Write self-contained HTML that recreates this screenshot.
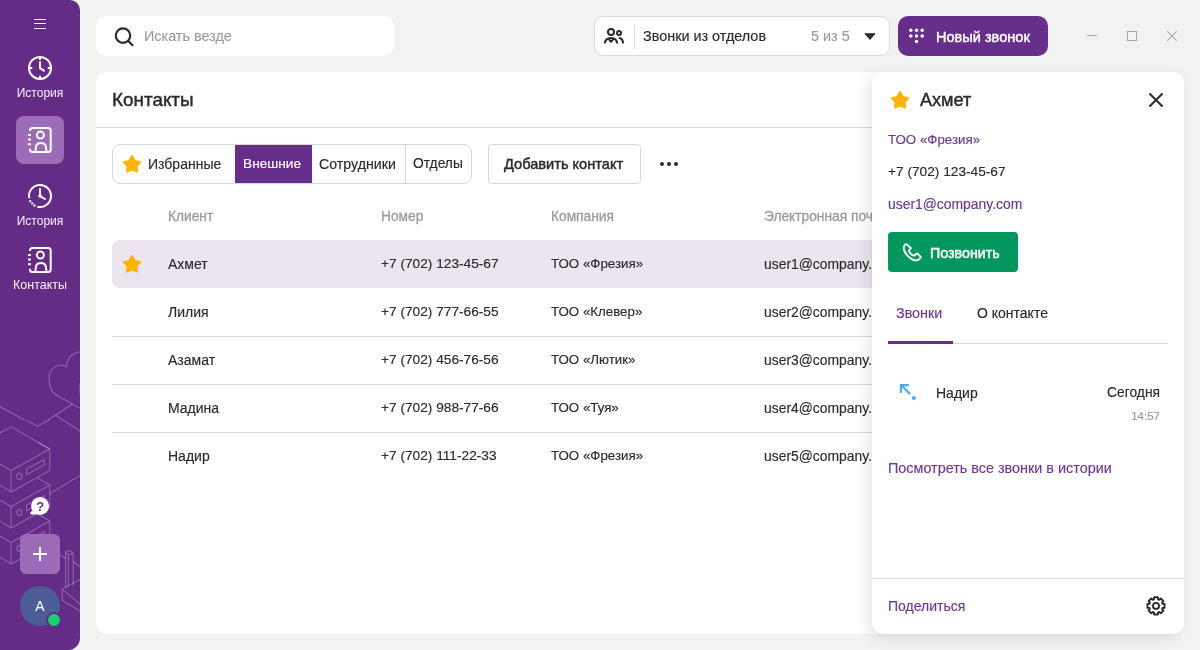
<!DOCTYPE html>
<html><head><meta charset="utf-8">
<style>
*{box-sizing:border-box;margin:0;padding:0}
html,body{width:1200px;height:650px;overflow:hidden;background:#f1f2f2;font-family:"Liberation Sans",sans-serif;color:#2b2b2b}
.abs{position:absolute}
.t{position:absolute;white-space:nowrap;font-size:14px;line-height:20px;height:20px;-webkit-text-stroke:0.15px currentColor}
#side{position:absolute;left:0;top:0;width:80px;height:650px;background:#652c87;border-radius:0 10px 12px 0;overflow:hidden}
.slabel{position:absolute;left:0;width:80px;text-align:center;color:#f6f2f9;font-size:12px;line-height:20px}
.purple{color:#6d3697}
.grey{color:#9b9b9b}
.b{font-weight:bold}
.m{-webkit-text-stroke:0.45px currentColor}
.grey.m{-webkit-text-stroke:0.3px currentColor}
#wrap{position:absolute;left:0;top:0;width:1200px;height:650px;will-change:transform}
</style></head><body><div id="wrap">
<div id="side">
  <!-- background pattern -->
  <svg class="abs" style="left:0;top:0" width="80" height="650" viewBox="0 0 80 650" fill="none" stroke="#ffffff" stroke-opacity="0.26" stroke-width="1.1">
    <path d="M80 351.7C72 353 67 358 66.5 367C64 365 62 365 60.3 365.2C52 366 48 374 49.2 379.4C49 388 53 394 59 396.6L80 408.3"/>
    <path d="M0 406.5L24.6 420M72.6 404L48 420M55.4 415L62.8 420"/>
    <path d="M25.8 420L37.5 426.2L49.2 420M62.8 420L80 431"/>
    <path d="M80 383v11"/>
    <path d="M0 432.9L11.1 426.8L49.8 448.9"/>
    <g id="box">
      <path d="M37.5 441.9L49.8 448.9L11.1 470.5L0 464.3M11.1 470.5V492L49.8 470.5V448.9M0 485.2L11.1 492"/>
      <path d="M26.5 469.2L44.3 459.4V464.9L26.5 474.8Z"/>
      <ellipse cx="19.4" cy="476.4" rx="2.6" ry="3"/>
    </g>
    <use href="#box" y="36"/>
    <use href="#box" y="72"/>
    <path d="M49.8 493.8L80 475.4"/>
    <path d="M65.6 552.3V587.4M68.3 555V586.8M73.2 553V585.5M65.6 552.3L68.9 550.5L73.2 553L68.3 555Z"/>
    <path d="M73.2 561.5L80 566.5M59.7 554.8L65.6 558.5M62.2 589.2L80 579.4M62.2 589.2L80 604M62.2 589.2V600.3L80 611"/>
  </svg>
  <!-- hamburger -->
  <div class="abs" style="left:34px;top:18.5px;width:12px;height:1.2px;background:#fff"></div>
  <div class="abs" style="left:34px;top:23px;width:12px;height:1.2px;background:#fff"></div>
  <div class="abs" style="left:34px;top:27.5px;width:12px;height:1.2px;background:#fff"></div>
  <!-- history 1 -->
  <svg class="abs" style="left:26px;top:54px" width="28" height="28" viewBox="0 0 28 28" fill="none" stroke="#fff" stroke-width="2" stroke-linecap="butt">
    <circle cx="14" cy="13.9" r="11"/>
    <path d="M14 3.5v2.6M14 21.7v2.6M3.6 13.9h2.6M21.8 13.9h2.6"/>
    <path d="M14 8V14.2L17.9 16.7" stroke-linecap="round" stroke-linejoin="round"/>
  </svg>
  <div class="slabel" style="top:82.6px">История</div>
  <!-- active contacts -->
  <div class="abs" style="left:16px;top:116px;width:48px;height:48px;background:#9c6cb8;border-radius:8px"></div>
  <svg class="abs" style="left:26px;top:124px" width="28" height="32" viewBox="0 0 28 32" fill="none" stroke="#fff" stroke-width="2">
    <path d="M4 7V6.5A2.5 2.5 0 0 1 6.5 4H22.2A2.5 2.5 0 0 1 24.7 6.5V25.4A2.5 2.5 0 0 1 22.2 27.9H6.5A2.5 2.5 0 0 1 4 25.4V24.8"/>
    <circle cx="14.4" cy="11.1" r="3.5"/>
    <path d="M9.2 27.9L10 22.5C10.5 20.2 12.5 19.1 14.9 19.1C17.3 19.1 19.3 20.2 19.8 22.5L20.6 27.9"/>
    <path d="M2 11h3M2 15.6h3M2 20.3h3"/>
  </svg>
  <!-- history 2 -->
  <svg class="abs" style="left:26px;top:182px" width="28" height="28" viewBox="0 0 28 28" fill="none" stroke="#fff" stroke-width="2">
    <path d="M11.34 24.67A11 11 0 1 0 3.21 16.16"/>
    <path d="M14 7V14L18.9 17" stroke-linecap="round" stroke-linejoin="round"/>
    <circle cx="14" cy="14" r="1.8" fill="#fff" stroke="none"/>
    <path d="M4.2 19.2h0.01M6.3 21.4h0.01M8.5 23.5h0.01" stroke-width="2" stroke-linecap="square"/>
  </svg>
  <div class="slabel" style="top:210.6px">История</div>
  <!-- contacts -->
  <svg class="abs" style="left:26px;top:244px" width="28" height="32" viewBox="0 0 28 32" fill="none" stroke="#fff" stroke-width="2">
    <path d="M4 7V6.5A2.5 2.5 0 0 1 6.5 4H22.2A2.5 2.5 0 0 1 24.7 6.5V25.4A2.5 2.5 0 0 1 22.2 27.9H6.5A2.5 2.5 0 0 1 4 25.4V24.8"/>
    <circle cx="14.4" cy="11.1" r="3.5"/>
    <path d="M9.2 27.9L10 22.5C10.5 20.2 12.5 19.1 14.9 19.1C17.3 19.1 19.3 20.2 19.8 22.5L20.6 27.9"/>
    <path d="M2 11h3M2 15.6h3M2 20.3h3"/>
  </svg>
  <div class="slabel" style="top:274.5px;font-size:12.5px">Контакты</div>
  <!-- help -->
  <svg class="abs" style="left:28px;top:494px" width="24" height="24" viewBox="0 0 24 24">
    <circle cx="12.1" cy="11.9" r="9" fill="#fff"/>
    <path d="M4.3 16.4L2.3 18.4Q1.8 20.6 4.6 20.6L9 20.4Z" fill="#fff"/>
    <text x="12.2" y="16.6" font-family="Liberation Sans" font-weight="bold" font-size="13" text-anchor="middle" fill="#652c87">?</text>
  </svg>
  <!-- plus -->
  <div class="abs" style="left:20px;top:534px;width:40px;height:40px;background:#9c6cb8;border-radius:6px"></div>
  <div class="abs" style="left:33px;top:553px;width:14px;height:2px;background:#fff"></div>
  <div class="abs" style="left:39px;top:547px;width:2px;height:14px;background:#fff"></div>
  <!-- avatar -->
  <div class="abs" style="left:20px;top:586px;width:40px;height:40px;background:#4a5d97;border-radius:50%;color:#fff;font-size:14px;text-align:center;line-height:40px">A</div>
  <div class="abs" style="left:46px;top:612px;width:16px;height:16px;background:#12d36b;border:2px solid #652c87;border-radius:50%"></div>
</div>

<!-- search -->
<div class="abs" style="left:96px;top:16px;width:298px;height:40px;background:#fff;border-radius:10px">
  <svg class="abs" style="left:17px;top:9px" width="22" height="22" viewBox="0 0 22 22" fill="none" stroke="#2b2b2b" stroke-width="2.2" stroke-linecap="round">
    <circle cx="10" cy="10.6" r="7.2"/><path d="M15.3 15.9L19.5 20.2"/>
  </svg>
  <div class="t grey" style="left:48px;top:9.8px;font-size:14.4px">Искать везде</div>
</div>

<!-- dropdown -->
<div class="abs" style="left:594px;top:16px;width:296px;height:40px;background:#fff;border:1px solid #dadada;border-radius:10px">
  <svg class="abs" style="left:9px;top:8px" width="22" height="22" viewBox="0 0 22 22" fill="none" stroke="#2b2b2b" stroke-width="2">
    <circle cx="7" cy="6.9" r="3"/><circle cx="15" cy="8" r="2"/>
    <path d="M1 18.5C1 15 3.5 13 7 13C10.5 13 13 15 13 18.5"/>
    <path d="M4.2 13.3L7 16.8L9.8 13.3" stroke-linejoin="round"/>
    <path d="M14.75 13C17.5 13 19 15 19 18.5"/>
  </svg>
  <div class="abs" style="left:39px;top:8px;width:1px;height:24px;background:#dcdcdc"></div>
  <div class="t" style="left:48px;top:9px;font-size:14.4px">Звонки из отделов</div>
  <div class="t grey" style="left:216px;top:9px;font-size:14.4px">5 из 5</div>
  <svg class="abs" style="left:269px;top:15.5px" width="12" height="8" viewBox="0 0 12 8"><path d="M1 0.8h10L6 6.4z" fill="#2b2b2b" stroke="#2b2b2b" stroke-linejoin="round"/></svg>
</div>

<!-- new call -->
<div class="abs" style="left:898px;top:16px;width:150px;height:40px;background:#662d8b;border-radius:10px">
  <svg class="abs" style="left:10px;top:12px" width="18" height="18" viewBox="0 0 18 18" fill="#fff">
    <circle cx="2.8" cy="2.2" r="1.75"/><circle cx="8.5" cy="2.2" r="1.75"/><circle cx="14.2" cy="2.2" r="1.75"/>
    <circle cx="2.8" cy="7.9" r="1.75"/><circle cx="8.5" cy="7.9" r="1.75"/><circle cx="14.2" cy="7.9" r="1.75"/>
    <circle cx="8.5" cy="13.6" r="1.75"/>
  </svg>
  <div class="t m" style="left:38px;top:11px;font-size:14.55px;color:#fff">Новый звонок</div>
</div>

<!-- window controls -->
<div class="abs" style="left:1087px;top:35px;width:10px;height:1px;background:#a8a8a8"></div>
<div class="abs" style="left:1127px;top:31px;width:10px;height:10px;border:1px solid #a8a8a8"></div>
<svg class="abs" style="left:1166px;top:30px" width="12" height="12" viewBox="0 0 12 12" stroke="#a8a8a8" stroke-width="1.1"><path d="M1.2 1.2l9.6 9.6M10.8 1.2l-9.6 9.6"/></svg>

<!-- main -->
<div class="abs" style="left:96px;top:72px;width:1088px;height:562px;background:#fff;border-radius:10px;overflow:hidden">
  <div class="t m" style="left:16px;top:18px;font-size:18.9px">Контакты</div>
  <div class="abs" style="left:0;top:55px;width:1088px;height:1px;background:#dcdcdc"></div>
  <!-- segmented -->
  <div class="abs" style="left:16px;top:72px;width:360px;height:40px;border:1px solid #d6d6d6;border-radius:8px;overflow:hidden">
    <div class="abs" style="left:122px;top:-1px;width:77px;height:40px;background:#662d8b"></div>
    <div class="abs" style="left:292px;top:0;width:1px;height:38px;background:#d6d6d6"></div>
  </div>
  <svg class="abs" style="left:24px;top:80px" width="24" height="24" viewBox="0 0 24 24"><path d="M12.00 4.05L14.88 8.79L20.27 10.06L16.66 14.26L17.11 19.79L12.00 17.65L6.89 19.79L7.34 14.26L3.73 10.06L9.12 8.79Z" fill="#ffb400" stroke="#ffb400" stroke-width="1.8" stroke-linejoin="round"/></svg>
  <div class="t" style="left:52px;top:82px">Избранные</div>
  <div class="t" style="left:147px;top:82px;color:#fff;font-size:13.7px">Внешние</div>
  <div class="t" style="left:223px;top:82px;font-size:14.2px">Сотрудники</div>
  <div class="t" style="left:317px;top:82px;font-size:13.8px">Отделы</div>
  <!-- add contact -->
  <div class="abs" style="left:392px;top:72px;width:153px;height:40px;border:1px solid #d6d6d6;border-radius:4px"></div>
  <div class="t m" style="left:408px;top:82px;font-size:14.6px">Добавить контакт</div>
  <!-- more dots -->
  <div class="abs" style="left:564px;top:90px;width:4px;height:4px;border-radius:50%;background:#2b2b2b"></div>
  <div class="abs" style="left:571px;top:90px;width:4px;height:4px;border-radius:50%;background:#2b2b2b"></div>
  <div class="abs" style="left:578px;top:90px;width:4px;height:4px;border-radius:50%;background:#2b2b2b"></div>
  <!-- table header -->
  <div class="t m grey" style="left:72px;top:134.5px;font-size:13.75px">Клиент</div>
  <div class="t m grey" style="left:285px;top:134.5px;font-size:13.75px">Номер</div>
  <div class="t m grey" style="left:455px;top:134.5px;font-size:13.75px">Компания</div>
  <div class="t m grey" style="left:668px;top:134.5px;font-size:13.75px">Электронная почта</div>
  <!-- highlight row -->
  <div class="abs" style="left:16px;top:168px;width:1080px;height:48px;background:#ece5f0;border-radius:8px"></div>
  <svg class="abs" style="left:24px;top:180px" width="24" height="24" viewBox="0 0 24 24"><path d="M12.00 4.05L14.88 8.79L20.27 10.06L16.66 14.26L17.11 19.79L12.00 17.65L6.89 19.79L7.34 14.26L3.73 10.06L9.12 8.79Z" fill="#ffb400" stroke="#ffb400" stroke-width="1.8" stroke-linejoin="round"/></svg>
  <div class="abs" style="left:16px;top:264px;width:1080px;height:1px;background:#dcdcdc"></div>
  <div class="abs" style="left:16px;top:312px;width:1080px;height:1px;background:#dcdcdc"></div>
  <div class="abs" style="left:16px;top:360px;width:1080px;height:1px;background:#dcdcdc"></div>
  <div class="t" style="left:72px;top:182.2px">Ахмет</div>
  <div class="t" style="left:285px;top:182.2px;font-size:13.7px">+7 (702) 123-45-67</div>
  <div class="t" style="left:455px;top:182.2px;font-size:13.3px">ТОО «Фрезия»</div>
  <div class="t" style="left:668px;top:182.2px;font-size:13.9px">user1@company.com</div>
  <div class="t" style="left:72px;top:230.2px">Лилия</div>
  <div class="t" style="left:285px;top:230.2px;font-size:13.7px">+7 (702) 777-66-55</div>
  <div class="t" style="left:455px;top:230.2px;font-size:13.3px">ТОО «Клевер»</div>
  <div class="t" style="left:668px;top:230.2px;font-size:13.9px">user2@company.com</div>
  <div class="t" style="left:72px;top:278.2px">Азамат</div>
  <div class="t" style="left:285px;top:278.2px;font-size:13.7px">+7 (702) 456-76-56</div>
  <div class="t" style="left:455px;top:278.2px;font-size:13.3px">ТОО «Лютик»</div>
  <div class="t" style="left:668px;top:278.2px;font-size:13.9px">user3@company.com</div>
  <div class="t" style="left:72px;top:326.2px">Мадина</div>
  <div class="t" style="left:285px;top:326.2px;font-size:13.7px">+7 (702) 988-77-66</div>
  <div class="t" style="left:455px;top:326.2px;font-size:13.3px">ТОО «Туя»</div>
  <div class="t" style="left:668px;top:326.2px;font-size:13.9px">user4@company.com</div>
  <div class="t" style="left:72px;top:374.2px">Надир</div>
  <div class="t" style="left:285px;top:374.2px;font-size:13.7px">+7 (702) 111-22-33</div>
  <div class="t" style="left:455px;top:374.2px;font-size:13.3px">ТОО «Фрезия»</div>
  <div class="t" style="left:668px;top:374.2px;font-size:13.9px">user5@company.com</div>
</div>

<!-- panel -->
<div class="abs" style="left:872px;top:72px;width:312px;height:562px;background:#fff;border-radius:12px;box-shadow:-4px 4px 14px rgba(0,0,0,.10)">
  <svg class="abs" style="left:16px;top:16px" width="24" height="24" viewBox="0 0 24 24"><path d="M12.00 4.05L14.88 8.79L20.27 10.06L16.66 14.26L17.11 19.79L12.00 17.65L6.89 19.79L7.34 14.26L3.73 10.06L9.12 8.79Z" fill="#ffb400" stroke="#ffb400" stroke-width="1.8" stroke-linejoin="round"/></svg>
  <div class="t m" style="left:48px;top:18.4px;font-size:18.1px">Ахмет</div>
  <svg class="abs" style="left:276px;top:20px" width="16" height="16" viewBox="0 0 16 16" stroke="#2b2b2b" stroke-width="2.1" stroke-linecap="round"><path d="M2 2L14 14M14 2L2 14"/></svg>
  <div class="t purple" style="left:16px;top:58px;font-size:13.3px">ТОО «Фрезия»</div>
  <div class="t" style="left:16px;top:90.1px;font-size:13.7px">+7 (702) 123-45-67</div>
  <div class="t purple" style="left:16px;top:122px;font-size:13.9px">user1@company.com</div>
  <div class="abs" style="left:16px;top:160px;width:130px;height:40px;background:#039760;border-radius:4px"></div>
  <svg class="abs" style="left:29px;top:170px" width="24" height="24" viewBox="0 0 24 24" fill="none" stroke="#fff" stroke-width="1.9" stroke-linejoin="round"><path d="M5.6 2.2L9.5 5.6Q10 6.2 9.4 6.9L8.2 8.3Q7.8 9 8.5 10.2C9.5 11.8 11 13 12.5 13.5Q13.3 13.8 14 13.1L15.3 11.9Q16 11.3 16.8 11.9L19.3 14.4Q20 15.2 19.4 16C18.5 17.2 17 18.3 15 18.4C11 18.6 5.5 13.5 3.6 9.5C2.5 7 2.6 4.5 3.8 3Q4.6 2 5.6 2.2Z"/></svg>
  <div class="t m" style="left:58px;top:170.5px;color:#fff;font-size:14.25px">Позвонить</div>
  <div class="t purple" style="left:24px;top:230.5px;font-size:14.3px">Звонки</div>
  <div class="t" style="left:105px;top:230.5px">О контакте</div>
  <div class="abs" style="left:16px;top:271px;width:280px;height:1px;background:#d6d6d6"></div>
  <div class="abs" style="left:16px;top:269px;width:65px;height:3px;background:#662d8b"></div>
  <svg class="abs" style="left:26px;top:310px" width="20" height="20" viewBox="0 0 20 20" fill="none" stroke="#4aa9ee" stroke-width="2.1" stroke-linecap="butt" stroke-linejoin="miter"><path d="M3.3 3.3L12.2 12.2M2.9 11V3.1H10.9"/><circle cx="15.9" cy="15.9" r="2" fill="#4aa9ee" stroke="none"/></svg>
  <div class="t" style="left:64px;top:310.5px">Надир</div>
  <div class="t" style="right:24px;top:310.5px;font-size:13.8px">Сегодня</div>
  <div class="t grey" style="right:24px;top:333.5px;font-size:11.5px">14:57</div>
  <div class="t purple" style="left:16px;top:386.4px;font-size:14.4px">Посмотреть все звонки в истории</div>
  <div class="abs" style="left:0;top:506px;width:312px;height:1px;background:#d6d6d6"></div>
  <div class="t purple" style="left:16px;top:524.2px">Поделиться</div>
  <svg class="abs" style="left:272px;top:522px" width="24" height="24" viewBox="0 0 24 24" fill="none" stroke="#2b2b2b" stroke-width="1.9" stroke-linejoin="round"><circle cx="12" cy="11.9" r="3"/><path d="M9.93 5.32L10.10 3.31L13.90 3.31L14.07 5.32L15.19 5.78L16.73 4.48L19.42 7.17L18.12 8.71L18.58 9.83L20.59 10.00L20.59 13.80L18.58 13.97L18.12 15.09L19.42 16.63L16.73 19.32L15.19 18.02L14.07 18.48L13.90 20.49L10.10 20.49L9.93 18.48L8.81 18.02L7.27 19.32L4.58 16.63L5.88 15.09L5.42 13.97L3.41 13.80L3.41 10.00L5.42 9.83L5.88 8.71L4.58 7.17L7.27 4.48L8.81 5.78Z"/></svg>
</div>
</div></body></html>
